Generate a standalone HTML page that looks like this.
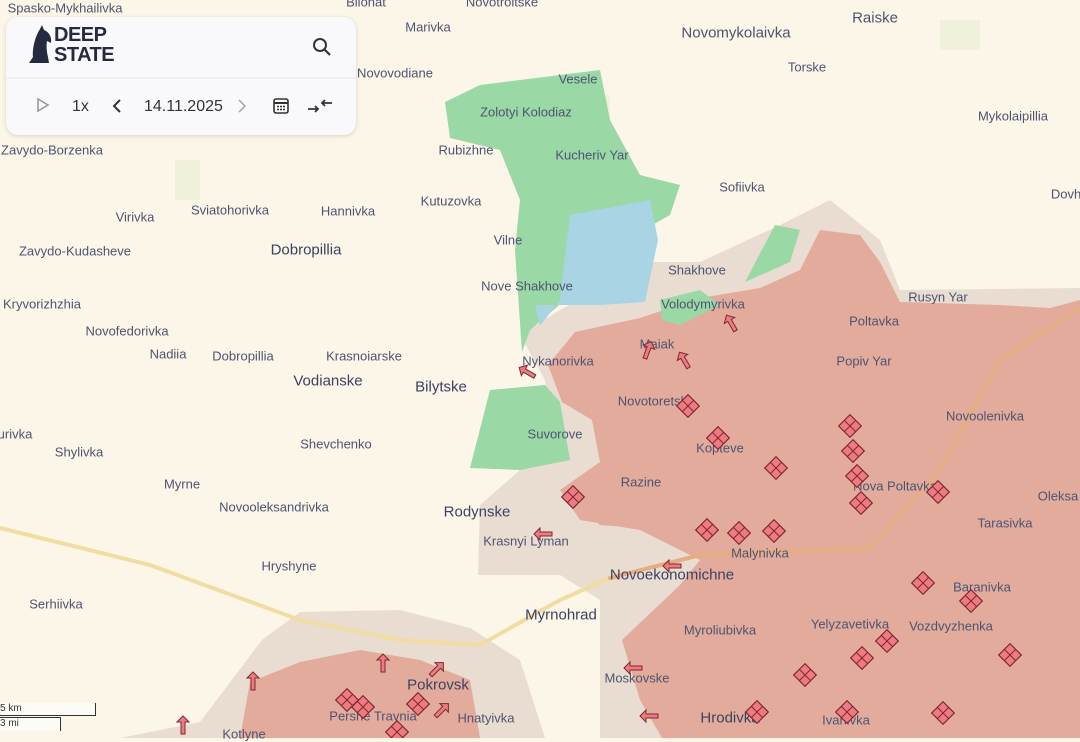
<!DOCTYPE html>
<html><head><meta charset="utf-8"><style>
html,body{margin:0;padding:0}
body{width:1080px;height:738px;overflow:hidden;background:#fbf6e7;font-family:"Liberation Sans",sans-serif;position:relative}
svg{position:absolute;left:0;top:0}
.l{position:absolute;font-size:13px;color:#4d5472;white-space:nowrap;transform:translate(-50%,-50%)}
.b{font-size:15px;color:#3c4262}
.panel{position:absolute;left:6px;top:17px;width:350px;height:118px;background:#f9f9fb;border-radius:12px;box-shadow:0 1px 4px rgba(0,0,0,.15)}
</style></head><body>
<svg width="1080" height="738" viewBox="0 0 1080 738">
<g fill="#eef0d8" opacity=".8">
<rect x="175" y="160" width="25" height="40"/><rect x="940" y="20" width="40" height="30"/><rect x="590" y="95" width="20" height="30"/>
</g>
<g fill="#e9ddd1">
<polygon points="520,335 560,310 650,262 700,262 780,225 830,200 880,240 900,290 1080,288 1080,738 600,738 600,600 560,575 478,575 480,505 520,470 555,440 545,380"/>
<polygon points="120,738 200,722 262,640 300,612 400,610 470,628 520,660 545,738"/>
</g>
<g fill="#e2ab9c">
<polygon points="575,332 640,318 700,298 760,288 800,270 820,230 860,235 880,262 900,302 1000,305 1050,308 1080,300 1080,738 662,738 640,700 622,640 680,585 700,560 640,530 580,520 560,490 600,462 592,420 562,402 548,365"/>
<polygon points="240,738 250,682 300,662 360,650 420,660 470,680 480,738"/>
<polygon points="600,525 640,528 630,490 600,480 565,495"/>
</g>
<g fill="#9ad8a6">
<polygon points="445,102 480,85 560,75 600,70 610,120 640,175 680,185 670,215 640,232 600,210 570,215 565,300 530,330 522,352 515,250 520,200 500,150 450,138"/>
<polygon points="470,468 490,390 545,385 560,402 570,460 520,470"/>
<polygon points="745,282 775,225 800,230 790,262"/>
<polygon points="660,300 700,290 720,305 680,325 662,320"/>
</g>
<polygon fill="#a8d4e4" points="570,215 650,200 658,240 645,302 600,305 535,305 540,326 560,300"/>
<g fill="none" stroke-linecap="round">
<polyline points="0,528 150,565 300,620 400,640 480,645 560,600 610,578" stroke="#f1dca2" stroke-width="4"/>
<polyline points="610,578 700,555 870,548 940,470 1000,360 1080,308" stroke="#e7ad82" stroke-width="4"/>
</g>
</svg>
<div class="panel">
<svg width="350" height="118" style="position:absolute;left:0;top:0">
<path d="M27,40 C26,30 30,18 34,12 L36,8 L38,13 C43,15 46,20 45,26 L41,24 C40,30 41,36 42,40 L43,46 L23,46 Z" fill="#252a40"/>
<path d="M32 82 L42 88 L32 94 Z" fill="none" stroke="#999" stroke-width="1.6"/>
<path d="M114 83 L108 89 L114 95" fill="none" stroke="#333" stroke-width="2"/>
<path d="M233 83 L239 89 L233 95" fill="none" stroke="#aaa" stroke-width="1.6"/>
<rect x="268" y="82" width="14" height="14" rx="2" fill="none" stroke="#333" stroke-width="1.6"/>
<line x1="268" y1="86" x2="282" y2="86" stroke="#333" stroke-width="2"/>
<path d="M271 89.5h2M274 89.5h2M277 89.5h2M271 92.5h2M274 92.5h2M277 92.5h2" stroke="#333" stroke-width="1.4"/>
<path d="M302 92 L312 92 M309 89 L312 92 L309 95 M326 86 L316 86 M319 83 L316 86 L319 89" fill="none" stroke="#333" stroke-width="1.8"/>
<circle cx="314" cy="28" r="6" fill="none" stroke="#333" stroke-width="2"/><line x1="318.5" y1="32.5" x2="324" y2="38" stroke="#333" stroke-width="2.2"/>
<line x1="0" y1="61" x2="350" y2="61" stroke="#e6e6ea"/>
</svg>
<div style="position:absolute;left:48px;top:8px;font-weight:bold;font-size:20px;line-height:20px;color:#252a40;letter-spacing:-0.5px">DEEP<br>STATE</div>
<div style="position:absolute;left:66px;top:81px;font-size:16px;color:#333">1x</div>
<div style="position:absolute;left:138px;top:81px;font-size:16px;color:#333">14.11.2025</div>
</div>
<div class="l" style="left:65px;top:8px">Spasko-Mykhailivka</div>
<div class="l" style="left:366px;top:2px">Bilohat</div>
<div class="l" style="left:502px;top:2px">Novotroitske</div>
<div class="l" style="left:428px;top:27px">Marivka</div>
<div class="l" style="left:736px;top:33px;font-size:15px">Novomykolaivka</div>
<div class="l" style="left:875px;top:18px;font-size:15px">Raiske</div>
<div class="l" style="left:807px;top:67px">Torske</div>
<div class="l" style="left:395px;top:73px">Novovodiane</div>
<div class="l" style="left:578px;top:79px">Vesele</div>
<div class="l" style="left:526px;top:112px">Zolotyi Kolodiaz</div>
<div class="l" style="left:1013px;top:116px">Mykolaipillia</div>
<div class="l" style="left:52px;top:150px">Zavydo-Borzenka</div>
<div class="l" style="left:466px;top:150px">Rubizhne</div>
<div class="l" style="left:592px;top:155px">Kucheriv Yar</div>
<div class="l" style="left:742px;top:187px">Sofiivka</div>
<div class="l" style="left:1066px;top:194px">Dovh</div>
<div class="l" style="left:451px;top:201px">Kutuzovka</div>
<div class="l" style="left:135px;top:217px">Virivka</div>
<div class="l" style="left:230px;top:210px">Sviatohorivka</div>
<div class="l" style="left:348px;top:211px">Hannivka</div>
<div class="l" style="left:508px;top:240px">Vilne</div>
<div class="l" style="left:75px;top:251px">Zavydo-Kudasheve</div>
<div class="l b" style="left:306px;top:250px">Dobropillia</div>
<div class="l" style="left:697px;top:270px">Shakhove</div>
<div class="l" style="left:527px;top:286px">Nove Shakhove</div>
<div class="l" style="left:938px;top:297px">Rusyn Yar</div>
<div class="l" style="left:42px;top:304px">Kryvorizhzhia</div>
<div class="l" style="left:703px;top:304px">Volodymyrivka</div>
<div class="l" style="left:874px;top:321px">Poltavka</div>
<div class="l" style="left:127px;top:331px">Novofedorivka</div>
<div class="l" style="left:657px;top:344px">Maiak</div>
<div class="l" style="left:168px;top:354px">Nadiia</div>
<div class="l" style="left:243px;top:356px">Dobropillia</div>
<div class="l" style="left:364px;top:356px">Krasnoiarske</div>
<div class="l" style="left:558px;top:361px">Nykanorivka</div>
<div class="l" style="left:864px;top:361px">Popiv Yar</div>
<div class="l b" style="left:328px;top:381px">Vodianske</div>
<div class="l b" style="left:441px;top:387px">Bilytske</div>
<div class="l" style="left:656px;top:401px">Novotoretske</div>
<div class="l" style="left:985px;top:416px">Novoolenivka</div>
<div class="l" style="left:15px;top:434px">urivka</div>
<div class="l" style="left:555px;top:434px">Suvorove</div>
<div class="l" style="left:336px;top:444px">Shevchenko</div>
<div class="l" style="left:720px;top:448px">Kopteve</div>
<div class="l" style="left:79px;top:452px">Shylivka</div>
<div class="l" style="left:641px;top:482px">Razine</div>
<div class="l" style="left:182px;top:484px">Myrne</div>
<div class="l" style="left:895px;top:486px">Nova Poltavka</div>
<div class="l" style="left:1058px;top:496px">Oleksa</div>
<div class="l" style="left:274px;top:507px">Novooleksandrivka</div>
<div class="l b" style="left:477px;top:512px">Rodynske</div>
<div class="l" style="left:1005px;top:523px">Tarasivka</div>
<div class="l" style="left:526px;top:541px">Krasnyi Lyman</div>
<div class="l" style="left:760px;top:553px">Malynivka</div>
<div class="l" style="left:289px;top:566px">Hryshyne</div>
<div class="l b" style="left:672px;top:575px">Novoekonomichne</div>
<div class="l" style="left:982px;top:587px">Baranivka</div>
<div class="l" style="left:56px;top:604px">Serhiivka</div>
<div class="l b" style="left:561px;top:615px">Myrnohrad</div>
<div class="l" style="left:850px;top:624px">Yelyzavetivka</div>
<div class="l" style="left:951px;top:626px">Vozdvyzhenka</div>
<div class="l" style="left:720px;top:630px">Myroliubivka</div>
<div class="l" style="left:637px;top:678px">Moskovske</div>
<div class="l b" style="left:438px;top:685px">Pokrovsk</div>
<div class="l" style="left:373px;top:716px">Pershe Travnia</div>
<div class="l" style="left:486px;top:718px">Hnatyivka</div>
<div class="l b" style="left:730px;top:718px">Hrodivka</div>
<div class="l" style="left:846px;top:720px">Ivanivka</div>
<div class="l" style="left:244px;top:734px">Kotlyne</div>
<div style="position:absolute;left:0;top:703px;width:95px;height:12px;border:1px solid #333;border-top:none;border-left:none;font-size:10px;color:#333;background:rgba(255,255,255,.6)">5 km</div>
<div style="position:absolute;left:0;top:717px;width:60px;height:13px;border:1px solid #333;border-bottom:none;border-left:none;font-size:10px;color:#333;background:rgba(255,255,255,.6)">3 mi</div>
<svg width="1080" height="738" viewBox="0 0 1080 738" style="pointer-events:none">
<defs>
<g id="d"><g transform="rotate(45)"><rect x="-8" y="-8" width="16" height="16" fill="#f07a82" stroke="#7a2a30" stroke-width="1.2"/><path d="M-8 0H8M0 -8V8" stroke="#7a2a30" stroke-width="1"/></g></g>
<g id="a"><path d="M0 -9 L6 -3 L2 -3 L2 9 L-2 9 L-2 -3 L-6 -3 Z" fill="#f07a82" stroke="#7a2a30" stroke-width="1"/></g>
</defs>
<use href="#d" x="688" y="406"/><use href="#d" x="718" y="438"/><use href="#d" x="776" y="468"/><use href="#d" x="850" y="426"/><use href="#d" x="853" y="451"/><use href="#d" x="857" y="476"/><use href="#d" x="861" y="503"/><use href="#d" x="938" y="492"/><use href="#d" x="573" y="497"/><use href="#d" x="707" y="530"/><use href="#d" x="739" y="533"/><use href="#d" x="774" y="531"/><use href="#d" x="923" y="583"/><use href="#d" x="971" y="601"/><use href="#d" x="1010" y="655"/><use href="#d" x="887" y="641"/><use href="#d" x="862" y="658"/><use href="#d" x="805" y="675"/><use href="#d" x="943" y="713"/><use href="#d" x="847" y="712"/><use href="#d" x="757" y="712"/><use href="#d" x="347" y="700"/><use href="#d" x="363" y="707"/><use href="#d" x="418" y="704"/><use href="#d" x="397" y="732"/>
<use href="#a" transform="translate(527,372) rotate(-60)"/><use href="#a" transform="translate(648,350) rotate(20)"/><use href="#a" transform="translate(684,360) rotate(-30)"/><use href="#a" transform="translate(731,323) rotate(-30)"/><use href="#a" transform="translate(543,534) rotate(-90)"/><use href="#a" transform="translate(672,566) rotate(-90)"/><use href="#a" transform="translate(633,668) rotate(-90)"/><use href="#a" transform="translate(649,716) rotate(-90)"/><use href="#a" transform="translate(383,663)"/><use href="#a" transform="translate(437,669) rotate(45)"/><use href="#a" transform="translate(442,710) rotate(45)"/><use href="#a" transform="translate(253,681)"/><use href="#a" transform="translate(183,725)"/>
</svg>
</body></html>
